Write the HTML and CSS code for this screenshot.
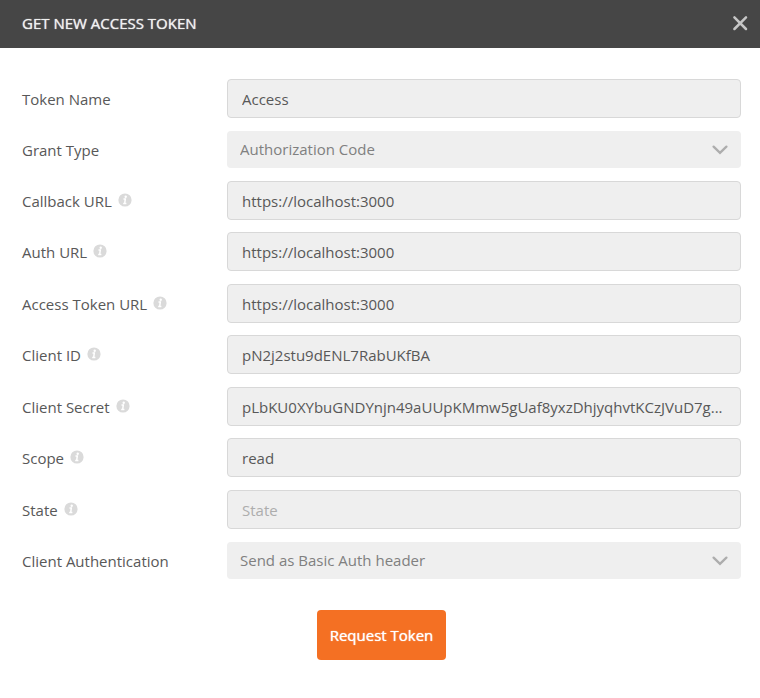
FILE: index.html
```html
<!DOCTYPE html>
<html lang="en">
<head>
<meta charset="utf-8">
<meta name="viewport" content="width=device-width, initial-scale=1">
<title>Get new access token</title>
<link rel="stylesheet" href="styles.css">
</head>
<body>
<svg class="sprite" aria-hidden="true">
  <symbol id="info" viewBox="0 0 14 14">
    <circle cx="7" cy="7" r="6.6" fill="#dadada"/>
    <circle cx="7.7" cy="3.7" r="1.2" fill="#fff"/>
    <path d="M5.500 6.100h1.800L6.700 10.300M5.200 10.500h3.200" fill="none" stroke="#fff" stroke-width="1.500"/>
  </symbol>
  <symbol id="chevron" viewBox="0 0 16 10">
    <path d="M1.600 1.600 8 7.800l6.400-6.200" fill="none" stroke="#adadad" stroke-width="2.300" stroke-linecap="round"/>
  </symbol>
</svg>
<header class="header">
  <h1 class="title">GET NEW ACCESS TOKEN</h1>
  <button class="close" type="button" aria-label="Close">
    <svg width="16" height="16" viewBox="0 0 16 16"><path d="M2.400 2.400 14 14M14 2.400 2.400 14" fill="none" stroke="#c6c6c6" stroke-width="2.500" stroke-linecap="round"/></svg>
  </button>
</header>
<form class="form">
  <div class="fields">
    <div class="field">
      <label class="label" for="name">Token Name</label>
      <input class="input" id="name" type="text" value="Access">
    </div>
    <div class="field">
      <label class="label" for="grant">Grant Type</label>
      <div class="picker">
        <select class="select" id="grant"><option>Authorization Code</option></select>
        <svg class="chevron"><use href="#chevron"/></svg>
      </div>
    </div>
    <div class="field">
      <label class="label" for="callback">Callback URL <svg class="info"><use href="#info"/></svg></label>
      <input class="input" id="callback" type="text" value="https://localhost:3000">
    </div>
    <div class="field">
      <label class="label" for="auth">Auth URL <svg class="info"><use href="#info"/></svg></label>
      <input class="input" id="auth" type="text" value="https://localhost:3000">
    </div>
    <div class="field">
      <label class="label" for="token">Access Token URL <svg class="info"><use href="#info"/></svg></label>
      <input class="input" id="token" type="text" value="https://localhost:3000">
    </div>
    <div class="field">
      <label class="label" for="client">Client ID <svg class="info"><use href="#info"/></svg></label>
      <input class="input" id="client" type="text" value="pN2j2stu9dENL7RabUKfBA">
    </div>
    <div class="field">
      <label class="label" for="secret">Client Secret <svg class="info"><use href="#info"/></svg></label>
      <input class="input" id="secret" type="text" value="pLbKU0XYbuGNDYnjn49aUUpKMmw5gUaf8yxzDhjyqhvtKCzJVuD7g...">
    </div>
    <div class="field">
      <label class="label" for="scope">Scope <svg class="info"><use href="#info"/></svg></label>
      <input class="input" id="scope" type="text" value="read">
    </div>
    <div class="field">
      <label class="label" for="state">State <svg class="info"><use href="#info"/></svg></label>
      <input class="input" id="state" type="text" placeholder="State">
    </div>
    <div class="field">
      <label class="label" for="method">Client Authentication</label>
      <div class="picker">
        <select class="select" id="method"><option>Send as Basic Auth header</option></select>
        <svg class="chevron"><use href="#chevron"/></svg>
      </div>
    </div>
  </div>
  <button class="submit" type="button">Request Token</button>
</form>
</body>
</html>
```
FILE: styles.css
```css
* {
  box-sizing: border-box;
}

body {
  margin: 0;
  background: #fff;
  color: #585858;
  font: 15px/20px "Open Sans", sans-serif;
}

input,
select,
button {
  margin: 0;
  font: inherit;
}

.sprite {
  position: absolute;
  width: 0;
  height: 0;
}

.header {
  display: flex;
  align-items: center;
  justify-content: space-between;
  height: 48px;
  padding: 0 12px 2px 22px;
  background: #464646;
}

.title {
  margin: 0;
  color: #f0f0f0;
  font-size: 15px;
  font-weight: 500;
  text-shadow: 0 0 1px #f0f0f0;
}

.close {
  display: flex;
  padding: 0;
  border: 0;
  background: none;
}

.form {
  display: flex;
  flex-direction: column;
  align-items: center;
  padding: 31px 19px 32px 22px;
}

.fields {
  display: flex;
  flex-direction: column;
  gap: 12px;
  width: 100%;
}

.field {
  display: grid;
  grid-template-columns: 205px 1fr;
  align-items: center;
  min-height: 39px;
}

.field:nth-child(2n + 4) {
  margin-bottom: 1px;
}

.label {
  display: flex;
  align-items: center;
  gap: 6px;
}

.info {
  width: 14px;
  height: 14px;
  margin-bottom: 2px;
}

.input {
  width: 100%;
  height: 39px;
  padding: 0 14px;
  border: 1px solid #d8d8d8;
  border-radius: 4px;
  background: #efefef;
  color: #585858;
  text-overflow: ellipsis;
}

.input::placeholder {
  color: #adadad;
}

.picker {
  display: grid;
  align-items: center;
}

.select {
  grid-area: 1 / 1;
  width: 100%;
  height: 37px;
  padding: 0 40px 1px 13px;
  border: 0;
  border-radius: 4px;
  background: #efefef;
  color: #808080;
  appearance: none;
}

.chevron {
  grid-area: 1 / 1;
  justify-self: end;
  width: 16px;
  height: 10px;
  margin-right: 13px;
  pointer-events: none;
}

.submit {
  height: 50px;
  margin-top: 29px;
  padding: 0 13px;
  border: 0;
  border-radius: 4px;
  background: #f47023;
  color: #fff;
  font-weight: 500;
  text-shadow: 0 0 1px #fff;
}
```
